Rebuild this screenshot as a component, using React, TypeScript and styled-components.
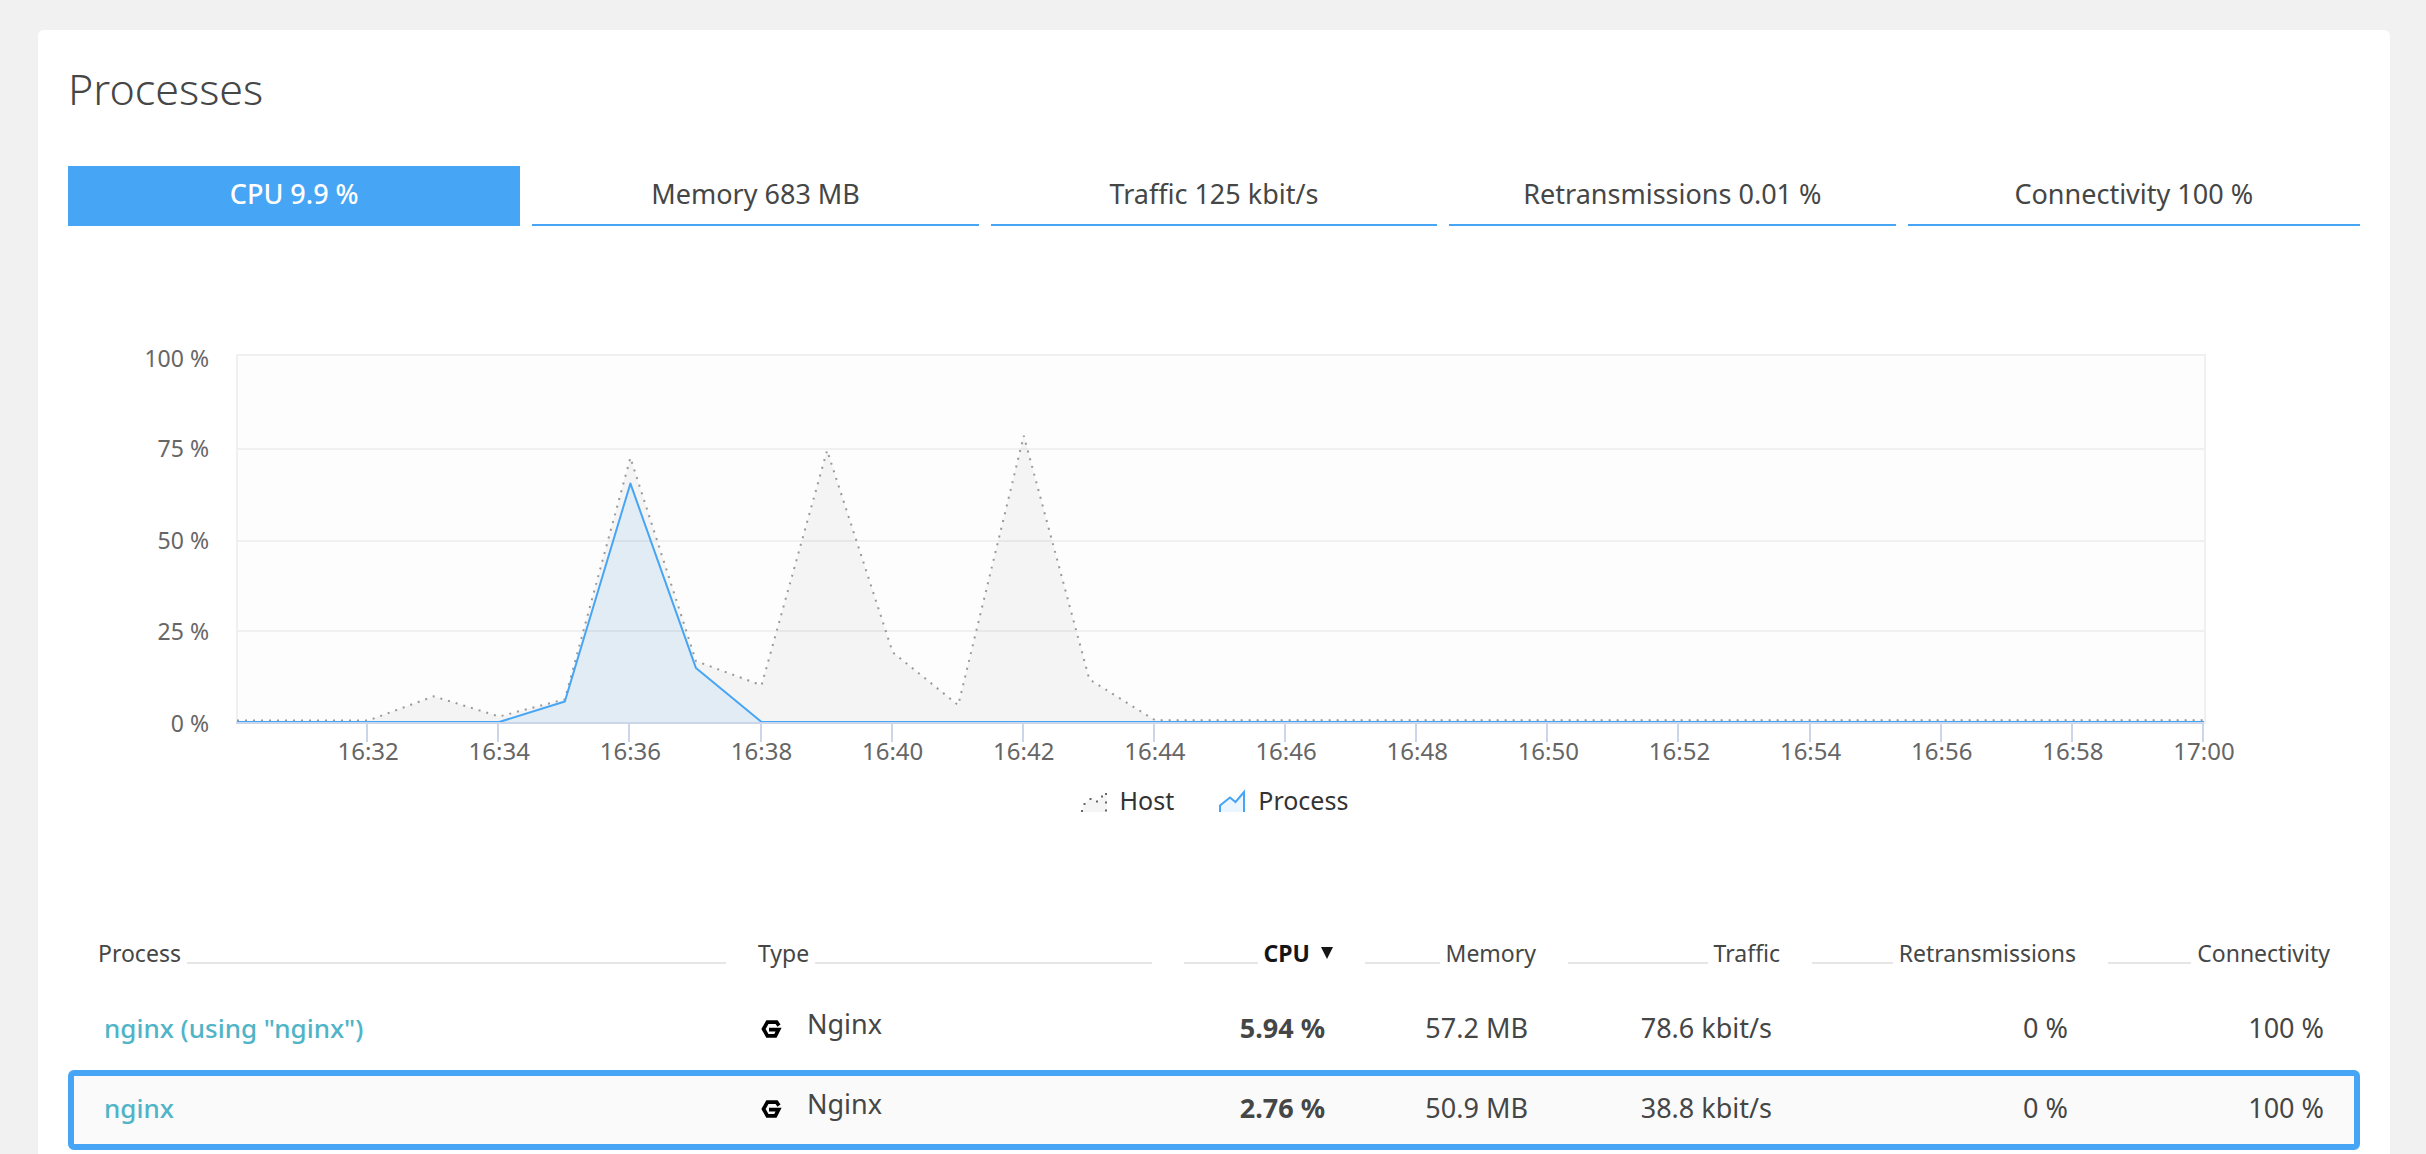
import React, { useState } from "react";
import styled, { createGlobalStyle, css } from "styled-components";

const BLUE = "#46a5f4";
const TEXT = "#454646";

const GlobalStyle = createGlobalStyle`
  *, *::before, *::after { box-sizing: border-box; }
  body {
    margin: 0;
    background: #f1f1f1;
    color: ${TEXT};
    font-family: "Noto Sans", "Open Sans", sans-serif;
  }
  button {
    margin: 0;
    padding: 0;
    border: 0;
    background: none;
    color: inherit;
    font: inherit;
    cursor: pointer;
  }
`;

const Page = styled.main`
  display: flex;
  flex-direction: column;
  min-height: 100vh;
  padding: 30px 36px 0 38px;
`;

const Card = styled.section`
  flex: 1;
  padding: 28px 30px 0;
  border-radius: 6px 6px 0 0;
  background: #fff;
`;

const Title = styled.h1`
  margin: 0 0 46px;
  font-size: 43px;
  font-weight: 300;
  line-height: 62px;
`;

const Tabs = styled.div`
  display: grid;
  grid-template-columns: repeat(5, 1fr);
`;

const TabSlot = styled.div`
  display: flex;
  padding: 0 6px;

  &:first-child { padding-left: 0; }
  &:last-child { padding-right: 0; }
`;

const Tab = styled.button<{ $active: boolean }>`
  flex: 1;
  height: 60px;
  padding-bottom: 4px;
  border-bottom: 2px solid ${BLUE};
  font-size: 27px;
  white-space: nowrap;

  ${({ $active }) =>
    $active &&
    css`
      background: ${BLUE};
      color: #fff;
      font-weight: 500;
    `}
`;

const Figure = styled.figure`
  margin: 104px 0 121px;
`;

const ChartSvg = styled.svg`
  display: block;
  width: 100%;
  height: auto;
  overflow: visible;
`;

const AxisLabel = styled.text<{ $size: number }>`
  fill: #666;
  font-size: ${({ $size }) => $size}px;
`;

const Legend = styled.figcaption`
  display: flex;
  justify-content: center;
  gap: 44px;
  margin-top: 14px;
  color: #333;
  font-size: 25px;
  line-height: 32px;
`;

const LegendItem = styled.span`
  display: flex;
  align-items: center;
  gap: 12px;
`;

const Table = styled.table`
  width: 100%;
  table-layout: fixed;
  border-collapse: separate;
  border-spacing: 0;
`;

const Col = styled.col<{ $share: number }>`
  width: ${({ $share }) => ($share / 2292) * 100}%;
`;

const HeadCell = styled.th`
  padding: 0 16px 21px;
  font-size: 23px;
  font-weight: 400;
  line-height: 32px;

  &:first-child { padding-left: 30px; }
  &:last-child { padding-right: 30px; }
`;

const HeadContent = styled.div<{ $reverse: boolean }>`
  display: flex;
  flex-direction: ${({ $reverse }) => ($reverse ? "row-reverse" : "row")};
  align-items: flex-end;
  gap: 6px;
`;

const Rule = styled.span`
  flex: 1;
  height: 2px;
  margin-bottom: 5px;
  background: #e6e6e6;
`;

const SortButton = styled.button<{ $sorted: boolean }>`
  display: flex;
  align-items: center;
  gap: 11px;

  ${({ $sorted }) =>
    $sorted &&
    css`
      color: #151515;
      font-weight: 700;
    `}
`;

const Row = styled.tr<{ $selected: boolean }>`
  ${({ $selected }) =>
    $selected &&
    css`
      border-radius: 6px;
      outline: 6px solid ${BLUE};
      outline-offset: -6px;
      background: #fafafa;
    `}
`;

const Cell = styled.td<{ $numeric?: boolean; $strong?: boolean }>`
  height: 80px;
  padding: 0 24px 4px 16px;
  font-size: 27px;
  font-weight: ${({ $strong }) => ($strong ? 700 : 400)};
  line-height: 36px;
  text-align: ${({ $numeric }) => ($numeric ? "right" : "left")};
  white-space: nowrap;

  &:first-child { padding-left: 36px; }
  &:last-child { padding-right: 36px; }
`;

const TypeCell = styled(Cell)`
  padding-bottom: 12px;
`;

const TypeContent = styled.div`
  display: flex;
  align-items: flex-end;
  gap: 23px;
`;

const ProcessLink = styled.a`
  color: #50b4c8;
  font-size: 26px;
  font-weight: 500;
  text-decoration: none;
`;

const TABS = [
  "CPU 9.9 %",
  "Memory 683 MB",
  "Traffic 125 kbit/s",
  "Retransmissions 0.01 %",
  "Connectivity 100 %",
];

const COLUMNS = [
  { name: "Process", share: 674, numeric: false },
  { name: "Type", share: 426, numeric: false },
  { name: "CPU", share: 181, numeric: true },
  { name: "Memory", share: 203, numeric: true },
  { name: "Traffic", share: 244, numeric: true },
  { name: "Retransmissions", share: 296, numeric: true },
  { name: "Connectivity", share: 268, numeric: true },
];

const ROWS = [
  { name: 'nginx (using "nginx")', values: ["5.94 %", "57.2 MB", "78.6 kbit/s", "0 %", "100 %"] },
  { name: "nginx", values: ["2.76 %", "50.9 MB", "38.8 kbit/s", "0 %", "100 %"] },
];

// One sample per minute, 16:30 to 17:00, in percent.
const HOST = [
  0.4, 0.4, 0.4, 7, 1.5, 6.2, 72, 16.6, 10, 74, 19, 4.6, 78, 11.6, 0.5,
  ...Array(16).fill(0.5),
];
const PROCESS = [0, 0, 0, 0, 0, 5.6, 65, 14.7, ...Array(23).fill(0)];

const LEFT = 169;
const RIGHT = 2136;
const BASE = 392;
const TOP = 25;
const GRID = [
  { label: "100 %", y: 25, baseline: 37 },
  { label: "75 %", y: 119, baseline: 127 },
  { label: "50 %", y: 211, baseline: 219 },
  { label: "25 %", y: 301, baseline: 310 },
  { label: "0 %", y: 393, baseline: 402 },
];

const xAt = (minute: number) => LEFT + ((RIGHT - LEFT) * minute) / 30;
const yAt = (percent: number) => BASE - ((BASE - TOP) * percent) / 100;
const toPoints = (data: number[]) => data.map((v, i) => `${xAt(i)},${yAt(v)}`).join(" ");
const toArea = (data: number[]) => `${LEFT},${BASE} ${toPoints(data)} ${RIGHT},${BASE}`;

function Chart() {
  return (
    <ChartSvg viewBox="0 0 2292 440" role="img" aria-label="CPU usage of host and process">
      <rect x={LEFT} y={TOP} width={RIGHT - LEFT} height={BASE - TOP} fill="#fdfdfd" />
      <g stroke="#f0f0f0" strokeWidth="2" shapeRendering="crispEdges">
        {GRID.slice(0, 4).map(({ y }) => (
          <line key={y} x1={LEFT} x2={RIGHT} y1={y} y2={y} />
        ))}
        <line x1={LEFT} x2={LEFT} y1={TOP - 1} y2={BASE + 2} />
        <line x1={RIGHT + 1} x2={RIGHT + 1} y1={TOP - 1} y2={BASE + 2} />
      </g>
      <polygon points={toArea(HOST)} fill="rgba(0,0,0,0.035)" />
      <polyline points={toPoints(HOST)} fill="none" stroke="#999" strokeWidth="2" strokeDasharray="2 6" />
      <polygon points={toArea(PROCESS)} fill={BLUE} fillOpacity="0.1" />
      <polyline points={toPoints(PROCESS)} fill="none" stroke={BLUE} strokeWidth="2" strokeLinejoin="round" />
      <g stroke="#ccd6eb" strokeWidth="2" shapeRendering="crispEdges">
        <line x1={LEFT - 1} x2={RIGHT} y1={BASE + 1} y2={BASE + 1} />
        {Array.from({ length: 15 }, (_, i) => {
          const x = Math.round(xAt(i * 2 + 2)) - 1;
          return <line key={i} x1={x} x2={x} y1={BASE + 2} y2={BASE + 20} />;
        })}
      </g>
      {GRID.map(({ label, baseline }) => (
        <AxisLabel key={label} $size={23} x="141" y={baseline} textAnchor="end">
          {label}
        </AxisLabel>
      ))}
      {Array.from({ length: 15 }, (_, i) => {
        const minute = 32 + i * 2;
        return (
          <AxisLabel key={minute} $size={24} x={xAt(minute - 30)} y="430" textAnchor="middle">
            {minute === 60 ? "17:00" : `16:${minute}`}
          </AxisLabel>
        );
      })}
    </ChartSvg>
  );
}

function HostMark() {
  return (
    <svg width="28" height="24" viewBox="0 0 28 24" aria-hidden="true">
      <path d="M2 24 L4 16 L11 10 L17 13.5 L27 5 V24 Z" fill="#f5f5f5" />
      <g fill="#666">
        <rect x="1" y="22" width="2" height="2" />
        <rect x="3.5" y="15" width="2" height="2" />
        <rect x="9.5" y="10" width="2" height="2" />
        <rect x="16" y="12.5" width="2" height="2" />
        <rect x="21" y="7.5" width="2" height="2" />
        <rect x="25" y="5" width="2" height="2" />
        <rect x="25" y="13.5" width="2" height="2" />
        <rect x="25" y="21.5" width="2" height="2" />
      </g>
    </svg>
  );
}

function ProcessMark() {
  return (
    <svg width="28" height="24" viewBox="0 0 28 24" aria-hidden="true">
      <path d="M2 24 V17.5 L12 9.5 L17.5 14 L26 4 V24 Z" fill={BLUE} fillOpacity="0.1" />
      <path d="M2 24 V17.5 L12 9.5 L17.5 14 L26 4 V24" fill="none" stroke={BLUE} strokeWidth="2" />
    </svg>
  );
}

function SortArrow() {
  return (
    <svg width="12" height="12" viewBox="0 0 12 12" aria-hidden="true">
      <path d="M0 0 H12 L6 12 Z" fill="#151515" />
    </svg>
  );
}

function NginxMark() {
  return (
    <svg width="26" height="26" viewBox="0 0 26 26" aria-hidden="true">
      <path
        d="M21 9.6 L18.6 6.1 H9.4 L5.5 13 L9.4 19.9 H17.4 L20.6 13.6 H11"
        fill="none"
        stroke="#000"
        strokeWidth="3.7"
      />
    </svg>
  );
}

export default function App() {
  const [tab, setTab] = useState(0);

  return (
    <Page>
      <GlobalStyle />
      <Card>
        <Title>Processes</Title>
        <Tabs role="tablist">
          {TABS.map((label, i) => (
            <TabSlot key={label} role="presentation">
              <Tab type="button" role="tab" aria-selected={i === tab} $active={i === tab} onClick={() => setTab(i)}>
                {label}
              </Tab>
            </TabSlot>
          ))}
        </Tabs>
        <Figure>
          <Chart />
          <Legend>
            <LegendItem>
              <HostMark />
              Host
            </LegendItem>
            <LegendItem>
              <ProcessMark />
              Process
            </LegendItem>
          </Legend>
        </Figure>
        <Table>
          <colgroup>
            {COLUMNS.map(({ name, share }) => (
              <Col key={name} $share={share} />
            ))}
          </colgroup>
          <thead>
            <tr>
              {COLUMNS.map(({ name, numeric }) => (
                <HeadCell key={name} scope="col" aria-sort={name === "CPU" ? "descending" : undefined}>
                  <HeadContent $reverse={numeric}>
                    <SortButton type="button" $sorted={name === "CPU"}>
                      {name}
                      {name === "CPU" && <SortArrow />}
                    </SortButton>
                    <Rule />
                  </HeadContent>
                </HeadCell>
              ))}
            </tr>
          </thead>
          <tbody>
            {ROWS.map(({ name, values }, r) => (
              <Row key={name} $selected={r === 1}>
                <Cell>
                  <ProcessLink href="#process">{name}</ProcessLink>
                </Cell>
                <TypeCell>
                  <TypeContent>
                    <NginxMark />
                    Nginx
                  </TypeContent>
                </TypeCell>
                {values.map((value, i) => (
                  <Cell key={i} $numeric $strong={i === 0}>
                    {value}
                  </Cell>
                ))}
              </Row>
            ))}
          </tbody>
        </Table>
      </Card>
    </Page>
  );
}
